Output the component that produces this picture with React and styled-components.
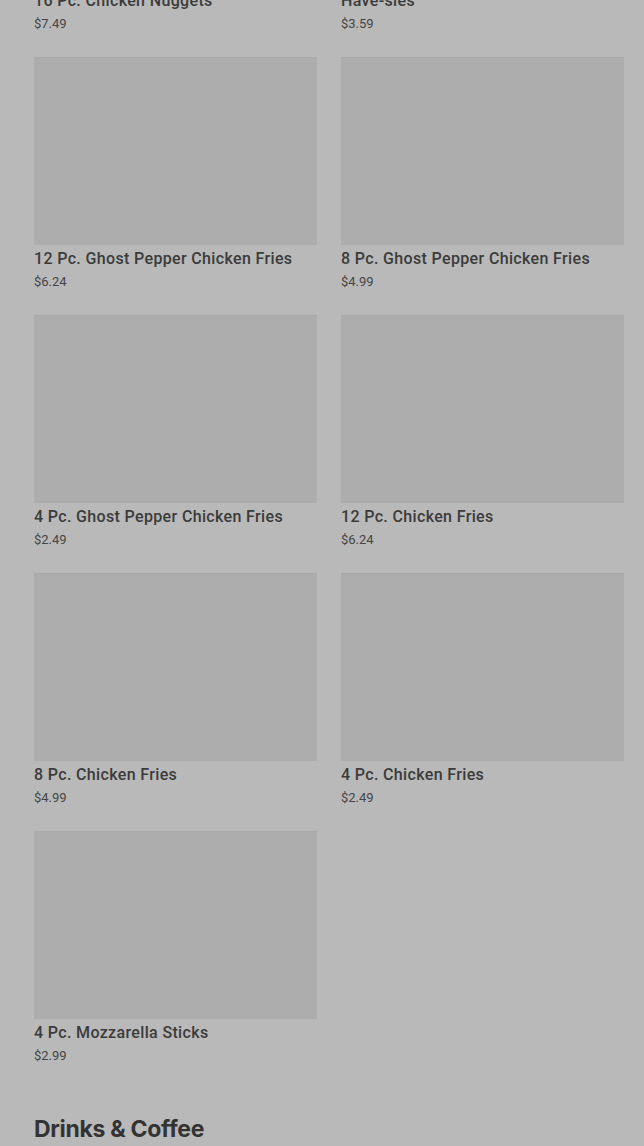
import React from "react";
import styled, { createGlobalStyle } from "styled-components";

const GlobalStyle = createGlobalStyle`
  html, body {
    margin: 0;
    padding: 0;
    background: #b9b9b9;
    overflow: hidden;
  }
  body {
    font-family: Roboto, "Liberation Sans", sans-serif;
  }
`;

// the list is scrolled: the first row's pictures sit above the top edge
const Page = styled.div`
  padding: 0 20px 40px 34px;
  margin-top: -201px;
`;

const Grid = styled.div`
  display: grid;
  grid-template-columns: 283px 283px;
  column-gap: 24px;
  row-gap: 24px;
`;

const Card = styled.div`
  display: flex;
  flex-direction: column;
`;

const Picture = styled.div`
  height: 188px;
  background: #adadad;
  border-top: 1px solid #a9a9a9;
  box-sizing: border-box;
`;

const Name = styled.div`
  margin-top: 4px;
  font-size: 16px;
  line-height: 20px;
  font-weight: 500;
  letter-spacing: 0.35px;
  color: #3b3b3b;
  white-space: nowrap;
`;

const Price = styled.div`
  margin-top: 4px;
  font-size: 13px;
  line-height: 18px;
  color: #454545;
`;

const SectionTitle = styled.h2`
  margin: 48px 0 0;
  font-family: Inter, "Liberation Sans", sans-serif;
  font-size: 23px;
  line-height: 32px;
  font-weight: 700;
  letter-spacing: -0.3px;
  color: #333333;
`;

const items = [
  { name: "16 Pc. Chicken Nuggets", price: "$7.49" },
  { name: "Have-sies", price: "$3.59" },
  { name: "12 Pc. Ghost Pepper Chicken Fries", price: "$6.24" },
  { name: "8 Pc. Ghost Pepper Chicken Fries", price: "$4.99" },
  { name: "4 Pc. Ghost Pepper Chicken Fries", price: "$2.49" },
  { name: "12 Pc. Chicken Fries", price: "$6.24" },
  { name: "8 Pc. Chicken Fries", price: "$4.99" },
  { name: "4 Pc. Chicken Fries", price: "$2.49" },
  { name: "4 Pc. Mozzarella Sticks", price: "$2.99" },
];

const App = () => (
  <>
    <GlobalStyle />
    <Page>
      <Grid>
        {items.map((item) => (
          <Card key={item.name}>
            <Picture />
            <Name>{item.name}</Name>
            <Price>{item.price}</Price>
          </Card>
        ))}
      </Grid>
      <SectionTitle>Drinks &amp; Coffee</SectionTitle>
    </Page>
  </>
);

export default App;
